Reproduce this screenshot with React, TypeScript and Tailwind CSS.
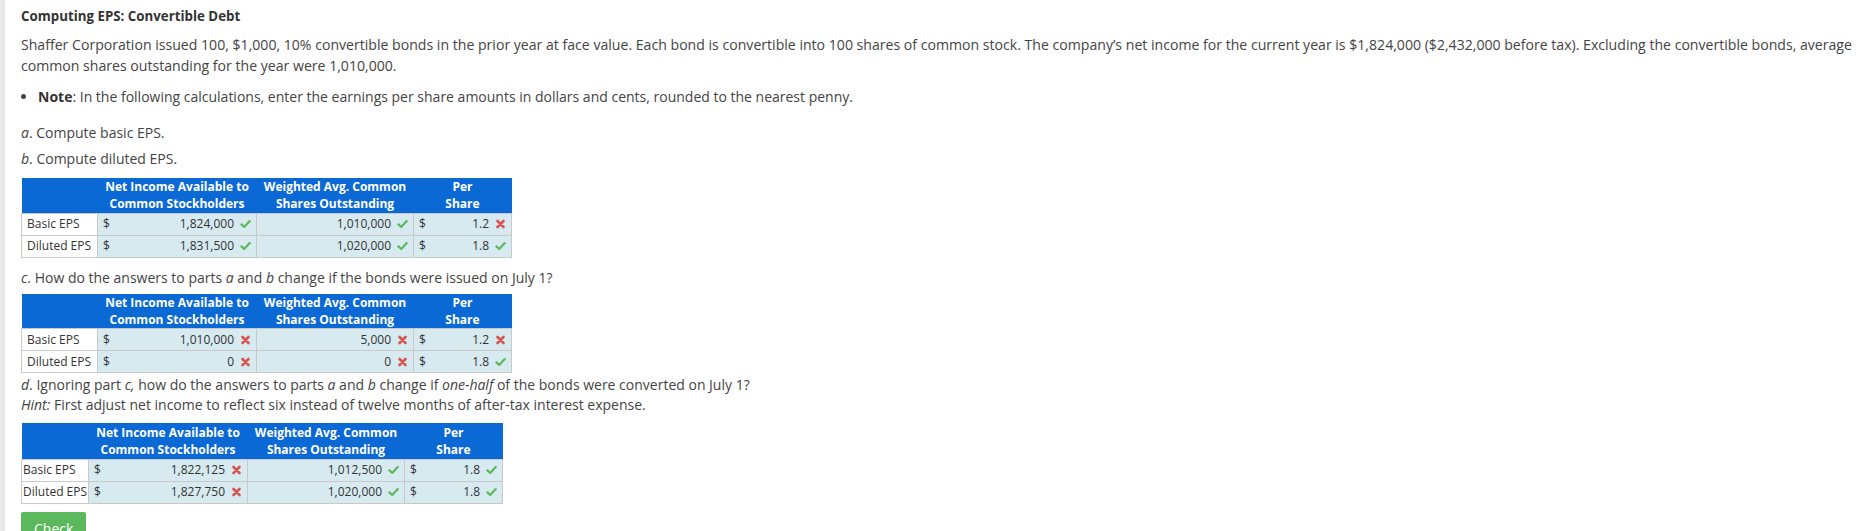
import React from "react";

type Cell = { value: string; ok: boolean; dollar?: boolean };
type Row = { label: string; cells: Cell[] };

function Mark({ ok }: { ok: boolean }) {
  if (ok) {
    return (
      <svg viewBox="0 0 12 10" className="ml-[6px] h-[10px] w-[11px] shrink-0">
        <path d="M1.6 5.4 L4.6 8.2 L10.6 1.8" fill="none" stroke="#5cb85c" strokeWidth="2.4" strokeLinecap="round" strokeLinejoin="round" />
      </svg>
    );
  }
  return (
    <svg viewBox="0 0 10 10" className="ml-[6px] h-[10px] w-[11px] shrink-0">
      <path d="M2 2 L8 8 M8 2 L2 8" fill="none" stroke="#d9534f" strokeWidth="2.6" strokeLinecap="round" />
    </svg>
  );
}

function EpsTable({ rows, tight }: { rows: Row[]; tight?: boolean }) {
  return (
    <table className={tight ? "w-[481px] table-fixed border-collapse" : "w-[490px] table-fixed border-collapse"}>
      <colgroup>
        <col className={tight ? "w-[67px]" : "w-[76px]"} />
        <col className="w-[159px]" />
        <col className="w-[157px]" />
        <col className="w-[98px]" />
      </colgroup>
      <thead>
        <tr className={tight ? "h-[36px] bg-[#0b69d6] text-white" : "h-[35px] bg-[#0b69d6] text-white"}>
          <th />
          <th className="text-[12px] font-bold leading-[17px]">
            Net Income Available to
            <br />
            Common Stockholders
          </th>
          <th className="text-[12px] font-bold leading-[17px]">
            Weighted Avg. Common
            <br />
            Shares Outstanding
          </th>
          <th className="text-[12px] font-bold leading-[17px]">
            Per
            <br />
            Share
          </th>
        </tr>
      </thead>
      <tbody>
        {rows.map((row) => (
          <tr key={row.label} className="h-[22px] text-[12px] text-[#333]">
            <td className={tight ? "border border-[#c9c9c9] bg-white pl-[1px] whitespace-nowrap" : "border border-[#c9c9c9] bg-white pl-[5px] whitespace-nowrap"}>
              {row.label}
            </td>
            {row.cells.map((cell, i) => (
              <td key={i} className="border border-[#c9c9c9] bg-[#d6eaf0] pl-[5px] pr-[5px]">
                <div className="flex items-center">
                  {cell.dollar && <span>$</span>}
                  <span className="ml-auto">{cell.value}</span>
                  <Mark ok={cell.ok} />
                </div>
              </td>
            ))}
          </tr>
        ))}
      </tbody>
    </table>
  );
}

const tableB: Row[] = [
  {
    label: "Basic EPS",
    cells: [
      { value: "1,824,000", ok: true, dollar: true },
      { value: "1,010,000", ok: true },
      { value: "1.2", ok: false, dollar: true },
    ],
  },
  {
    label: "Diluted EPS",
    cells: [
      { value: "1,831,500", ok: true, dollar: true },
      { value: "1,020,000", ok: true },
      { value: "1.8", ok: true, dollar: true },
    ],
  },
];

const tableC: Row[] = [
  {
    label: "Basic EPS",
    cells: [
      { value: "1,010,000", ok: false, dollar: true },
      { value: "5,000", ok: false },
      { value: "1.2", ok: false, dollar: true },
    ],
  },
  {
    label: "Diluted EPS",
    cells: [
      { value: "0", ok: false, dollar: true },
      { value: "0", ok: false },
      { value: "1.8", ok: true, dollar: true },
    ],
  },
];

const tableD: Row[] = [
  {
    label: "Basic EPS",
    cells: [
      { value: "1,822,125", ok: false, dollar: true },
      { value: "1,012,500", ok: true },
      { value: "1.8", ok: true, dollar: true },
    ],
  },
  {
    label: "Diluted EPS",
    cells: [
      { value: "1,827,750", ok: false, dollar: true },
      { value: "1,020,000", ok: true },
      { value: "1.8", ok: true, dollar: true },
    ],
  },
];

export default function App() {
  return (
    <div className="flex h-[531px] w-full overflow-hidden bg-white font-['Open_Sans',sans-serif] text-[#333]">
      <div className="w-[5px] shrink-0 bg-[#e9e9e9]" />
      <div className="flex-1 pl-4 pr-3 pt-[6px]">
        <h2 className="text-[13.3px] font-bold leading-[20px] text-[#333]">Computing EPS: Convertible Debt</h2>
        <p className="mt-2 text-[14.1px] leading-[21px] text-[#444]">
          Shaffer Corporation issued 100, $1,000, 10% convertible bonds in the prior year at face value. Each bond is
          convertible into 100 shares of common stock. The company’s net income for the current year is $1,824,000
          ($2,432,000 before tax). Excluding the convertible bonds, average common shares outstanding for the year were
          1,010,000.
        </p>
        <ul className="mt-[10px] list-disc pl-[17px] text-[14px] leading-[21px] text-[#444]">
          <li>
            <b className="text-[#333]">Note</b>: In the following calculations, enter the earnings per share amounts in
            dollars and cents, rounded to the nearest penny.
          </li>
        </ul>

        <p className="mt-[16px] text-[14px] leading-[20px] text-[#444]">
          <i>a</i>. Compute basic EPS.
        </p>
        <p className="mt-[6px] text-[14px] leading-[20px] text-[#444]">
          <i>b</i>. Compute diluted EPS.
        </p>
        <div className="mt-[9px]">
          <EpsTable rows={tableB} />
        </div>

        <p className="mt-[10px] text-[14px] leading-[20px] text-[#444]">
          <i>c</i>. How do the answers to parts <i>a</i> and <i>b</i> change if the bonds were issued on July 1?
        </p>
        <div className="mt-[6px]">
          <EpsTable rows={tableC} />
        </div>

        <p className="mt-[2px] text-[14px] leading-[20px] text-[#444]">
          <i>d</i>. Ignoring part <i>c,</i> how do the answers to parts <i>a</i> and <i>b</i> change if{" "}
          <i>one-half</i> of the bonds were converted on July 1?
        </p>
        <p className="text-[14px] leading-[20px] text-[#444]">
          <i>Hint:</i> First adjust net income to reflect six instead of twelve months of after-tax interest expense.
        </p>
        <div className="mt-[8px]">
          <EpsTable rows={tableD} tight />
        </div>

        <button className="mt-[8px] h-[34px] rounded-[2px] bg-[#5cb85c] px-[13px] text-[14px] text-white">Check</button>
      </div>
    </div>
  );
}
